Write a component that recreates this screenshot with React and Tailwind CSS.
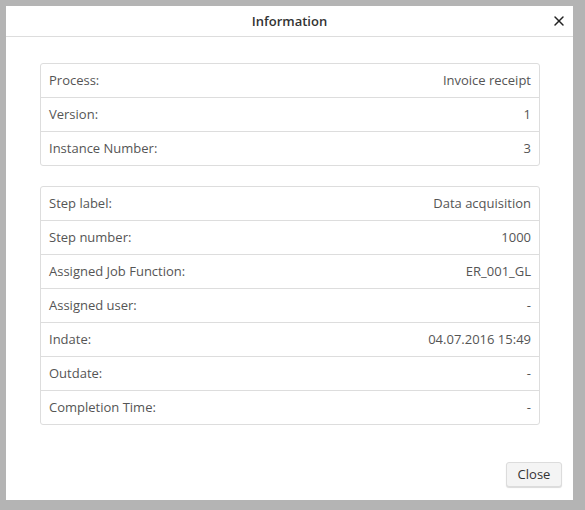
import { X } from "lucide-react";

const processRows = [
  ["Process:", "Invoice receipt"],
  ["Version:", "1"],
  ["Instance Number:", "3"],
];

const stepRows = [
  ["Step label:", "Data acquisition"],
  ["Step number:", "1000"],
  ["Assigned Job Function:", "ER_001_GL"],
  ["Assigned user:", "-"],
  ["Indate:", "04.07.2016 15:49"],
  ["Outdate:", "-"],
  ["Completion Time:", "-"],
];

function InfoTable({ rows }) {
  return (
    <div className="border border-[#dddddd] rounded-[3px] bg-white">
      {rows.map(([label, value], i) => (
        <div
          key={label}
          className={
            "flex justify-between items-center px-2 " +
            (i > 0 ? "h-[34px] border-t border-[#dddddd]" : "h-[33px]")
          }
        >
          <span>{label}</span>
          <span>{value}</span>
        </div>
      ))}
    </div>
  );
}

export default function App() {
  return (
    <div
      className="w-[585px] h-[510px] bg-[#b4b4b4] pt-[6px] pl-[6px]"
      style={{ fontFamily: "'Open Sans', sans-serif" }}
    >
      <div className="h-[494px] w-[567px] bg-white flex flex-col text-[13px] text-[#555555]">
        <div className="relative h-[31px] pt-[1px] flex items-center justify-center border-b border-[#dddddd]">
          <span className="font-semibold text-[#333333]">Information</span>
          <X className="absolute right-[6px] top-[7px] w-[16px] h-[16px] text-[#222222]" strokeWidth={2.2} />
        </div>
        <div className="flex-1 pl-[34px] pr-[33px] pt-[26px] flex flex-col gap-[20px]">
          <InfoTable rows={processRows} />
          <InfoTable rows={stepRows} />
        </div>
        <div className="flex justify-end pr-[11px] pb-[13px]">
          <button className="w-[56px] h-[25px] bg-[#f4f4f4] border border-[#dcdcdc] rounded-[3px] shadow-[0_1px_1px_rgba(0,0,0,0.15)] text-[13px] text-[#333333]">
            Close
          </button>
        </div>
      </div>
    </div>
  );
}
